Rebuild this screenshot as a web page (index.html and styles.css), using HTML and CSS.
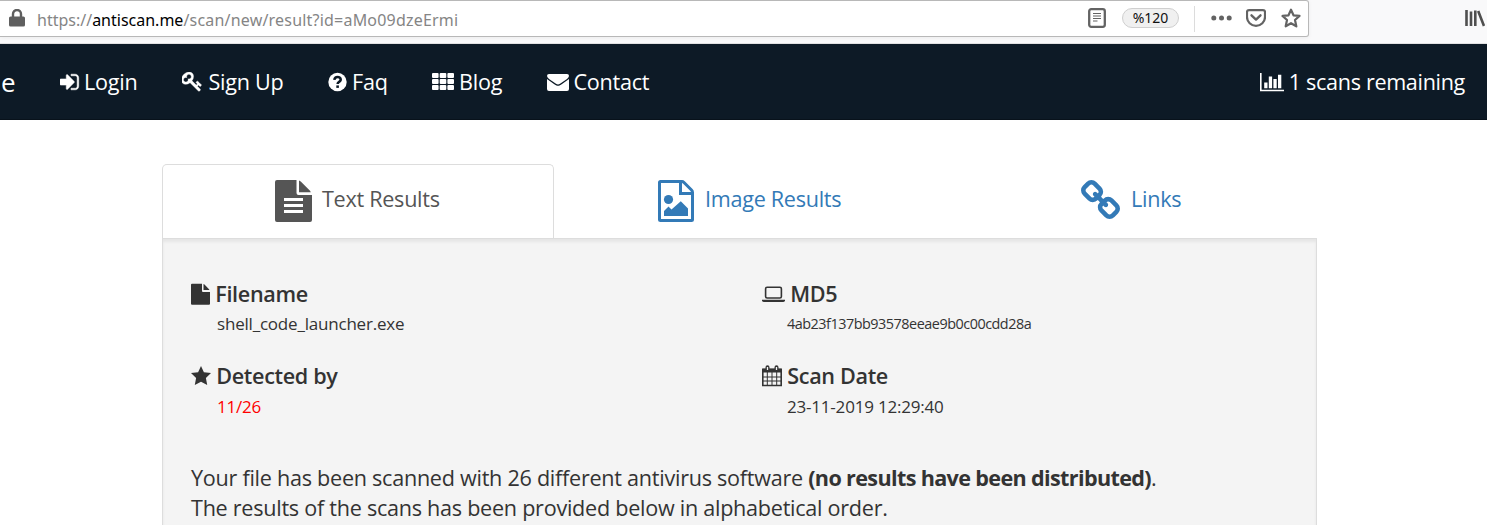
FILE: index.html
```html
<!DOCTYPE html>
<html lang="en">
<head>
<meta charset="utf-8">
<title>AntiScan</title>
<link rel="stylesheet" href="styles.css">
</head>
<body>
<div class="toolbar">
  <div class="urlbar">
    <svg class="lock" width="16" height="18" viewBox="0 0 16 18"><path d="M4 8V5a4 4 0 0 1 8 0v3" fill="none" stroke="#5f5f5f" stroke-width="2.4"/><rect x="0" y="7.5" width="16" height="10" rx="1.6" fill="#5f5f5f"/></svg>
    <span class="url"><span class="u1">https://</span><b class="u2">antiscan.me</b><span class="u3">/scan/new/result?id=aMo09dzeErmi</span></span>
    <svg class="reader" width="18" height="20" viewBox="0 0 18 20"><rect x="1.2" y="1.2" width="15.6" height="17.6" rx="2" fill="none" stroke="#636363" stroke-width="2.3"/><path d="M5 5.500h8M5 8h8M5 10.500h8M5 13h4.500" stroke="#636363" stroke-width="1.2"/></svg>
    <span class="percent"><span>%120</span></span>
    <i class="divider"></i>
    <svg class="dots" width="21" height="6" viewBox="0 0 21 6"><circle cx="2.800" cy="3" r="2.500"/><circle cx="10.500" cy="3" r="2.500"/><circle cx="18.200" cy="3" r="2.500"/></svg>
    <svg class="pocket" width="20" height="18" viewBox="0 0 20 18"><path d="M3 1.100h14q2 0 2 2V8a9 8.800 0 0 1-18 0V3.100q0-2 2-2z" fill="none" stroke="#636363" stroke-width="2.200"/><path d="M5.500 6.300L10 10.600l4.500-4.300" fill="none" stroke="#636363" stroke-width="2.400" stroke-linecap="round" stroke-linejoin="round"/></svg>
    <svg class="star" width="20" height="20" viewBox="0 0 20 20"><path d="M10 1.700l2.500 5.600 6 .6-4.500 4.100 1.300 6.300L10 15.200l-5.300 3.100L6 12 1.500 7.900l6-.6z" fill="none" stroke="#636363" stroke-width="2.200" stroke-linejoin="round"/></svg>
  </div>
  <svg class="library" width="20" height="18" viewBox="0 0 20 18"><path d="M1.500 1v16M6 2.500V17M10.300 1.500V17M13.200 2l5.800 15" fill="none" stroke="#4f4f4f" stroke-width="2.600"/></svg>
</div>

<nav class="nav">
  <span class="brand">e</span>
  <a class="item login"><svg width="20" height="20" viewBox="128 76 1640 1640"><path fill="#fff" stroke="#fff" stroke-width="40" d="M1312 896q0 26-19 45l-544 544q-19 19-45 19t-45-19-19-45v-288h-448q-26 0-45-19t-19-45v-384q0-26 19-45t45-19h448v-288q0-26 19-45t45-19 45 19l544 544q19 19 19 45zm352-352v704q0 119-84.500 203.500t-203.500 84.500h-320q-13 0-22.500-9.500t-9.500-22.500q-1-4-1-20t-.5-26.500 3-23.500 10-19.500 20.500-6.500h320q66 0 113-47t47-113v-704q0-66-47-113t-113-47h-312l-11.500-1-11.500-3-8-5.500-7-9-2-13.500q-1-4-1-20t-.5-26.500 3-23.500 10-19.500 20.500-6.500h320q119 0 203.500 84.500t84.500 203.500z"/></svg><span>Login</span></a>
  <a class="item signup"><svg width="21" height="20" viewBox="64 128 1743 1660"><path fill="#fff" stroke="#fff" stroke-width="30" d="M832 512q0-80-56-136t-136-56-136 56-56 136q0 42 19 83-41-19-83-19-80 0-136 56t-56 136 56 136 136 56 136-56 56-136q0-42-19-83 41 19 83 19 80 0 136-56t56-136zm851 704q0 17-49 66t-66 49q-9 0-28.500-16t-36.500-33-38.500-40-24.500-26l-96 96 220 220q28 28 28 68 0 42-39 81t-81 39q-40 0-68-28l-671-671q-176 131-365 131-163 0-265.500-102.500t-102.500-265.500q0-160 95-313t248-248 313-95q163 0 265.500 102.500t102.500 265.500q0 189-131 365l355 355 96-96q-3-3-26-24.500t-40-38.500-33-36.500-16-28.500q0-17 49-66t66-49q13 0 23 10 6 6 46 44.500t82 79.500 86.500 86 73 78 28.500 41z"/></svg><span>Sign Up</span></a>
  <a class="item faq"><svg width="19" height="20" viewBox="0 0 19 20"><circle cx="9.500" cy="10" r="9.200" fill="#fff"/><path d="M6.300 7.900C6.600 5.900 8 5.100 9.600 5.100c3.300 0 4.200 3.300 1.500 4.800-1 .600-1.500 1-1.500 2.100" fill="none" stroke="#0d1a26" stroke-width="2.500"/><path d="M8.300 13.400h2.600v2.500H8.300z" fill="#0d1a26"/></svg><span>Faq</span></a>
  <a class="item blog"><svg width="22" height="20" viewBox="0 0 22 20" fill="#fff"><g id="r"><rect x="0" y="1" width="6.600" height="4.900" rx="1"/><rect x="7.700" y="1" width="6.600" height="4.900" rx="1"/><rect x="15.400" y="1" width="6.600" height="4.900" rx="1"/></g><use href="#r" y="6"/><use href="#r" y="12"/></svg><span>Blog</span></a>
  <a class="item contact"><svg width="22" height="20" viewBox="0 0 22 20" fill="#fff"><path d="M0 4q0-2 2-2h18q2 0 2 2-.300 1.500-2 2.900l-7 4.900q-2 1.400-4 0L2 6.900Q.300 5.500 0 4z"/><path d="M0 7q8 5.800 9 6.300 2 1 4 0Q14 12.800 22 7v10q0 2-2 2H2q-2 0-2-2z"/></svg><span>Contact</span></a>
  <a class="item remaining"><svg width="25" height="20" viewBox="0 0 25 20" fill="#fff"><path d="M0 1h1.600v16.800H24v1.500H0zM4.200 10.500h3.300V16.300H4.200zM8.800 4.500h3.300v11.800H8.800zM13.400 7h3.300v9.300h-3.300zM18 2.800h3.300v13.500H18z"/></svg><span>1 scans remaining</span></a>
</nav>

<main class="main">
  <div class="tabs">
    <a class="tab active"><svg width="37" height="42" viewBox="0 0 37 42"><path d="M2 0h19.500v13q0 2 2 2H37v25q0 2-2 2H2q-2 0-2-2V2Q0 0 2 0z" fill="#555"/><path d="M24 .5q1 .2 2 1.200l8.500 8.500q1 1 1.300 2H24z" fill="#555"/><path d="M9 19.500h19M9 25.500h19M9 31.500h19" stroke="#fff" stroke-width="2.800"/></svg><span>Text Results</span></a>
    <a class="tab image"><svg width="36" height="42" viewBox="0 0 36 42"><path d="M2.500 1.500H24q1 0 2 1l7.500 7.500q1 1 1 2.500v27q0 1-1 1h-31q-1 0-1-1v-37q0-1 1-1z" fill="none" stroke="#337ab7" stroke-width="3"/><path d="M22.500 2v11.500H34" fill="none" stroke="#337ab7" stroke-width="3"/><circle cx="10.500" cy="19.500" r="4.600" fill="#337ab7"/><path d="M6 36v-5l4.500-4.500 3 3 9.300-8.300L30 28.500V36z" fill="#337ab7"/></svg><span>Image Results</span></a>
    <a class="tab links"><svg width="39" height="39" viewBox="80 16 1632 1632"><path fill="#337ab7" d="M1520 1216q0-40-28-68l-208-208q-28-28-68-28-42 0-72 32 3 3 19 18.500t21.500 21.500 15 19 13 25.500 3.500 27.500q0 40-28 68t-68 28q-15 0-27.500-3.500t-25.500-13-19-15-21.500-21.500-18.500-19q-33 31-33 73 0 40 28 68l206 207q27 27 68 27 40 0 68-26l147-146q28-28 28-67zm-703-705q0-40-28-68l-206-207q-28-28-68-28-39 0-68 27l-147 146q-28 28-28 67 0 40 28 68l208 208q27 27 68 27 42 0 72-31-3-3-19-18.500t-21.500-21.500-15-19-13-25.500-3.500-27.500q0-40 28-68t68-28q15 0 27.500 3.500t25.500 13 19 15 21.500 21.500 18.500 19q33-31 33-73zm895 705q0 120-85 203l-147 146q-83 83-203 83-121 0-204-85l-206-207q-83-83-83-203 0-123 88-209l-88-88q-86 88-208 88-120 0-204-84l-208-208q-84-84-84-204t85-203l147-146q83-83 203-83 121 0 204 85l206 207q83 83 83 203 0 123-88 209l88 88q86-88 208-88 120 0 204 84l208 208q84 84 84 204z"/></svg><span>Links</span></a>
  </div>
  <section class="panel">
    <div class="details">
      <div class="cell">
        <h4><svg width="19" height="22" viewBox="0 0 19 22"><path d="M1 .8h10V8q0 1 1 1h7v11.800q0 1-1 1H1q-1 0-1-1v-19q0-1 1-1z" fill="#333"/><path d="M12.500 1q.5.100 1 .6l4.300 4.300q.5.500.6 1.200h-5.900z" fill="#333"/></svg><span class="t1">Filename</span></h4>
        <p class="v1">shell_code_launcher.exe</p>
      </div>
      <div class="cell right">
        <h4><svg width="23" height="22" viewBox="0 0 23 22"><rect x="3.600" y="4.300" width="15.800" height="10.700" rx="1.500" fill="none" stroke="#333" stroke-width="1.600"/><path d="M0 16.700h23v1q-.5 1.400-2 1.400H2q-1.500 0-2-1.400z" fill="#333"/></svg><span class="t2">MD5</span></h4>
        <p class="v2">4ab23f137bb93578eeae9b0c00cdd28a</p>
      </div>
      <div class="cell">
        <h4><svg width="20" height="22" viewBox="0 0 20 22"><path d="M10 1l2.900 6.300 7.100.8-5.100 5 1.300 7L10 16.800 3.800 20.100l1.300-7-5.100-5 7.100-.8z" fill="#333"/></svg><span class="t3">Detected by</span></h4>
        <p class="v3">11/26</p>
      </div>
      <div class="cell right">
        <h4><svg width="20" height="22" viewBox="0 0 20 22"><path d="M.8 4.500h18.400v16H.8z" fill="none" stroke="#333" stroke-width="1.600"/><path d="M.3 3.500h19.400v4H.3z" fill="#333"/><path d="M5.300 7v13M10 7v13M14.700 7v13M1 12h18M1 16h18" stroke="#333" stroke-width="1"/><path d="M5.500 2.200v2.600M14.500 2.200v2.600" stroke="#333" stroke-width="4" stroke-linecap="round"/><path d="M5.500 2v3M14.500 2v3" stroke="#f4f4f4" stroke-width="1.300"/></svg><span class="t4">Scan Date</span></h4>
        <p class="v4">23-11-2019 12:29:40</p>
      </div>
    </div>
    <p class="summary"><span>Your file has been scanned with 26 different antivirus software <b>(no results have been distributed)</b>.</span><br><span>The results of the scans has been provided below in alphabetical order.</span></p>
  </section>
</main>
</body>
</html>
```
FILE: styles.css
```css
* { box-sizing: border-box; }
body { margin: 0; width: 1487px; height: 525px; overflow: hidden; background: #fff; color: #333; font-family: "Open Sans", sans-serif; }
svg { display: block; flex: none; }
span { white-space: nowrap; }

.toolbar { display: flex; align-items: flex-start; height: 44px; background: #f9f9fa; border-bottom: 1px solid #e1e1e2; }
.urlbar { display: flex; align-items: center; width: 1309px; height: 37px; padding-left: 9px; background: #fff; border: 1px solid #b8b8b8; border-left: 0; border-radius: 0 3px 3px 0; box-shadow: 0 1px 4px rgba(0,0,0,.06); }
.lock { margin-bottom: 1px; }
.url { width: 1051px; margin-left: 12px; font: 16px/22px "Noto Sans", sans-serif; color: #858585; padding-top: 2px; }
.url b { font-weight: 400; color: #000; }
.u3 { letter-spacing: .2px; }
.reader { margin-bottom: 1px; }
.percent { display: flex; align-items: center; justify-content: center; width: 57px; height: 20px; margin: 0 0 1px 16px; border: 1px solid #cfcfcf; border-radius: 10px; background: #f0f0f0; color: #111; font: 14px/18px "Noto Sans", sans-serif; }
.divider { width: 1px; height: 26px; margin-left: 15px; background: #dcdcdc; }
.dots { margin: 0 0 1px 16px; fill: #636363; }
.pocket { margin: 0 0 2px 14px; }
.star { margin: 0 0 1px 15px; }
.library { margin: 9px 0 0 156px; }

.nav { display: flex; align-items: center; height: 76px; background: #0d1a26; color: #fff; font-size: 21.6px; line-height: 30px; letter-spacing: -.25px; border-bottom: 1px solid #08121b; }
.brand { width: 60px; padding-left: 1px; font-size: 26px; }
.item { display: flex; align-items: center; }
.login { width: 122px; gap: 4px; }
.signup { width: 146px; gap: 5.5px; }
.faq { width: 104px; gap: 5px; }
.blog { width: 115px; gap: 5px; }
.contact { gap: 4.5px; }
.remaining { margin-left: auto; margin-right: 22px; gap: 4px; letter-spacing: -.33px; }

.main { width: 1155px; margin: 44px 0 0 162px; }
.tabs { display: flex; height: 74px; }
.tab { display: flex; flex: none; align-items: center; width: 391px; padding-bottom: 1px; font-size: 21.6px; line-height: 30px; letter-spacing: -.28px; color: #337ab7; }
.tab span { margin-bottom: 4px; }
.active { width: 392px; padding-left: 112px; color: #555; border: 1px solid #ddd; border-bottom: 0; border-radius: 5px 5px 0 0; }
.active span { margin-left: 10px; }
.image { padding-left: 104px; }
.image span { margin-left: 11px; }
.links { width: 371px; padding-left: 136px; }
.links svg { margin-bottom: 3px; }
.links span { margin-left: 11px; }

.panel { width: 1155px; height: 300px; padding: 40px 28px 0; background: #f4f4f4; border: 1px solid #ddd; box-shadow: inset 0 3px 3px rgba(0,0,0,.06); }
.details { display: grid; grid-template-columns: 571px 1fr; grid-auto-rows: 82px; }
h4 { display: flex; align-items: center; height: 30px; margin: 0; font-size: 21.6px; line-height: 30px; font-weight: 600; letter-spacing: -.35px; }
h4 span { margin-left: 5.3px; }
.cell p { height: 30px; margin: 0 0 0 26px; font-size: 17px; line-height: 30px; letter-spacing: -.2px; white-space: nowrap; }
.cell .v2 { margin-left: 25px; font-size: 14.4px; letter-spacing: -.48px; }
.cell .v3 { padding-top: 1px; color: #f00; }
.cell .v4 { margin-left: 25px; padding-top: 1px; }
.summary { margin: 20px 0 0; font-size: 21.6px; line-height: 30px; letter-spacing: -.265px; }
.summary b { font-weight: 700; letter-spacing: -.65px; }
```
